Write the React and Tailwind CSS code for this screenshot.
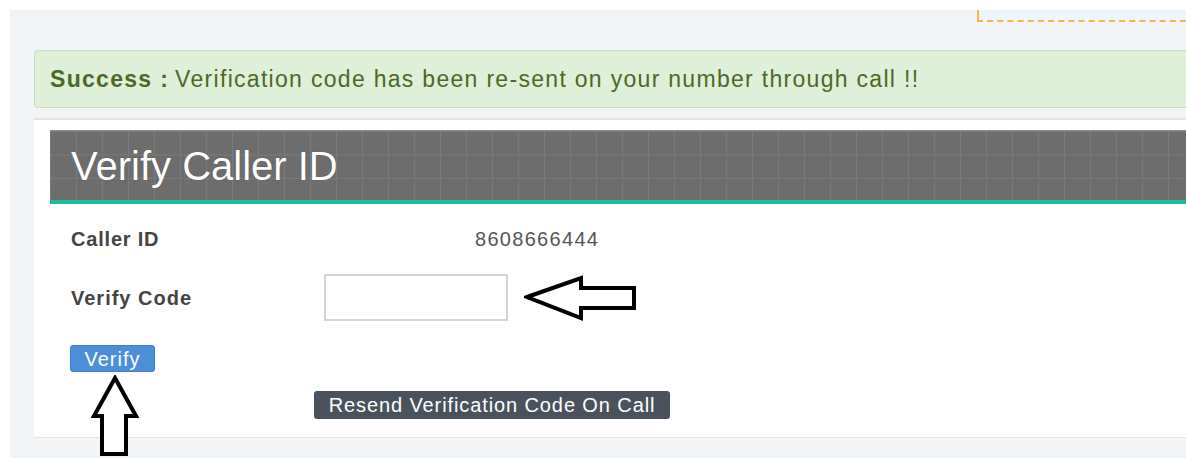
import React from "react";

function LeftArrow() {
  return (
    <svg width="114" height="46" viewBox="0 0 114 46" className="block">
      <polygon
        points="3,22 57,3 57,13 110,13 110,33 57,33 57,43"
        fill="white"
        stroke="black"
        strokeWidth="4"
        strokeLinejoin="miter"
      />
    </svg>
  );
}

function UpArrow() {
  return (
    <svg width="48" height="82" viewBox="0 0 48 82" className="block">
      <polygon
        points="24,3 45,41 35,41 35,79 11,79 11,41 3,41"
        fill="white"
        stroke="black"
        strokeWidth="4"
        strokeLinejoin="miter"
      />
    </svg>
  );
}

export default function App() {
  const code = "";

  return (
    <div
      className="w-[1186px] h-[458px] bg-white pl-[10px] pt-[10px] overflow-hidden"
      style={{ fontFamily: '"Liberation Sans", Arial, sans-serif' }}
    >
      <div className="h-full bg-[#f3f4f6] overflow-hidden">
        {/* notice box peeking in at the top */}
        <div className="flex">
          <div className="ml-[967px] w-[220px] h-[12px] bg-[#eef5fc] border-l-2 border-b-2 border-dashed border-[#f6b744]" />
        </div>

        <div className="pl-[24px] pt-[28px]">
          <div className="w-[1180px] h-[58px] flex items-center pl-[15px] bg-[#dff0d8] border border-[#c9ddbc] rounded-[4px] text-[23px] tracking-[1.3px] text-[#4b6a24] whitespace-nowrap">
            <span className="font-bold">Success :</span>
            <span className="ml-[6px]">Verification code has been re-sent on your number through call !!</span>
          </div>

          <div className="mt-[10px] w-[1180px] h-[320px] bg-white border-t-2 border-b border-[#e3e5e8] pl-[16px] pt-[10px]">
            <div className="h-[74px] bg-[#6d6d6d] bg-[linear-gradient(to_right,#7a7a7a_1px,transparent_1px),linear-gradient(to_bottom,#7a7a7a_1px,transparent_1px)] bg-[size:26px_23.5px] border-t border-[#8c8c8c] border-b-4 border-b-[#1abc9c] flex items-center pl-[21px]">
              <h1 className="text-[40px] text-white leading-none [text-shadow:0_0_1px_rgba(0,0,0,0.4)]">
                Verify Caller ID
              </h1>
            </div>

            <div className="pl-[21px]">
              <div className="flex items-center h-[30px] mt-[20px] text-[20px]">
                <span className="w-[404px] font-bold text-[#444] tracking-[0.8px]">Caller ID</span>
                <span className="text-[#555] tracking-[1.3px]">8608666444</span>
              </div>

              <div className="flex items-center mt-[20px]">
                <span className="w-[253px] font-bold text-[#444] text-[20px] tracking-[1px]">Verify Code</span>
                <input
                  type="text"
                  defaultValue={code}
                  className="w-[184px] h-[47px] border-2 border-[#d4d4d4] bg-white outline-none"
                />
                <div className="ml-[16px]">
                  <LeftArrow />
                </div>
              </div>

              <div className="relative mt-[24px] w-[85px]">
                <button className="-ml-[1px] w-[85px] h-[27px] rounded-[3px] bg-[#4a8fd7] border border-[#3f7fc4] text-white text-[20px] leading-none tracking-[1px]">
                  Verify
                </button>
                <div className="absolute left-[20px] top-[30px]">
                  <UpArrow />
                </div>
              </div>

              <div className="mt-[18px] ml-[243px]">
                <button className="w-[356px] h-[28px] rounded-[3px] bg-[#4a535d] text-white text-[20px] leading-none tracking-[0.9px]">
                  Resend Verification Code On Call
                </button>
              </div>
            </div>
          </div>
        </div>
      </div>
    </div>
  );
}
